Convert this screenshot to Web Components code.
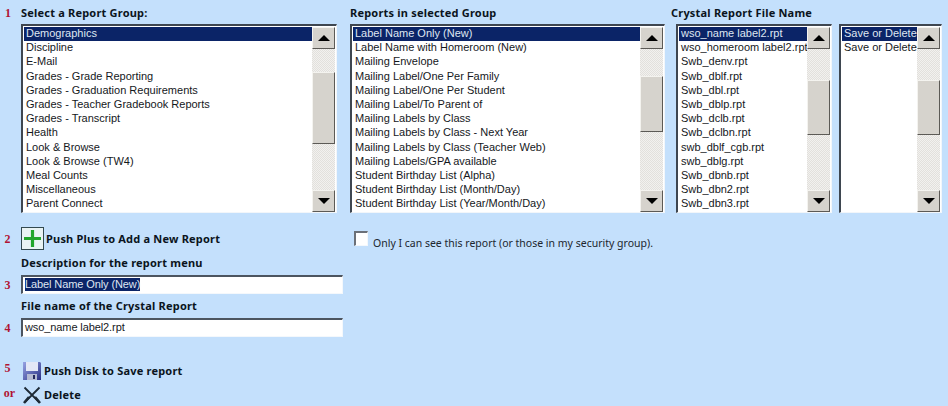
<!DOCTYPE html>
<html><head><meta charset="utf-8">
<style>
html,body{margin:0;padding:0;background:#c4e0fc;overflow:hidden}
body{width:948px;height:406px}
</style></head><body>
<report-form>
  <step-col slot="a" num="1" title="Select a Report Group:" >
    <list-box style="width:316px" thumb-top="23" thumb-h="72">
      <list-item selected>Demographics</list-item><list-item>Discipline</list-item><list-item>E-Mail</list-item><list-item>Grades - Grade Reporting</list-item><list-item>Grades - Graduation Requirements</list-item><list-item>Grades - Teacher Gradebook Reports</list-item><list-item>Grades - Transcript</list-item><list-item>Health</list-item><list-item>Look &amp; Browse</list-item><list-item>Look &amp; Browse (TW4)</list-item><list-item>Meal Counts</list-item><list-item>Miscellaneous</list-item><list-item>Parent Connect</list-item>
    </list-box>
  </step-col>
  <step-col slot="b" title="Reports in selected Group">
    <list-box style="width:315px" thumb-top="27" thumb-h="56">
      <list-item selected>Label Name Only (New)</list-item><list-item>Label Name with Homeroom (New)</list-item><list-item>Mailing Envelope</list-item><list-item>Mailing Label/One Per Family</list-item><list-item>Mailing Label/One Per Student</list-item><list-item>Mailing Label/To Parent of</list-item><list-item>Mailing Labels by Class</list-item><list-item>Mailing Labels by Class - Next Year</list-item><list-item>Mailing Labels by Class (Teacher Web)</list-item><list-item>Mailing Labels/GPA available</list-item><list-item>Student Birthday List (Alpha)</list-item><list-item>Student Birthday List (Month/Day)</list-item><list-item>Student Birthday List (Year/Month/Day)</list-item>
    </list-box>
  </step-col>
  <step-col slot="c" title="Crystal Report File Name" inset="5">
    <div style="display:flex;gap:7px">
    <list-box style="width:156px" thumb-top="31" thumb-h="55">
      <list-item selected>wso_name label2.rpt</list-item><list-item>wso_homeroom label2.rpt</list-item><list-item>Swb_denv.rpt</list-item><list-item>Swb_dblf.rpt</list-item><list-item>Swb_dbl.rpt</list-item><list-item>Swb_dblp.rpt</list-item><list-item>Swb_dclb.rpt</list-item><list-item>Swb_dclbn.rpt</list-item><list-item>swb_dblf_cgb.rpt</list-item><list-item>swb_dblg.rpt</list-item><list-item>Swb_dbnb.rpt</list-item><list-item>Swb_dbn2.rpt</list-item><list-item>Swb_dbn3.rpt</list-item>
    </list-box>
    <list-box style="width:103px" thumb-top="31" thumb-h="55">
      <list-item selected>Save or Delete</list-item><list-item>Save or Delete</list-item>
    </list-box>
    </div>
  </step-col>

  <step-row slot="lower" num="2" style="height:23px;margin-top:14px">
    <tool-action label="Push Plus to Add a New Report" gap="2">
      <svg width="23" height="23" viewBox="0 0 23 23"><rect x=".5" y=".5" width="22" height="22" fill="#e9f3f4" stroke="#33494f"/><path d="M11.500 3v17M3 11.500h17" stroke="#22a52c" stroke-width="3.200"/></svg>
    </tool-action>
    <check-line>Only I can see this report (or those in my security group).</check-line>
  </step-row>
  <field-row slot="lower" num="3" title="Description for the report menu" value="Label Name Only (New)" selected style="margin-top:6px"></field-row>
  <field-row slot="lower" num="4" title="File name of the Crystal Report" value="wso_name label2.rpt" style="margin-top:5px"></field-row>
  <step-row slot="lower" num="5" style="height:20px;margin-top:24px" num-shift="-3">
    <tool-action label="Push Disk to Save report" gap="2" pad="1">
      <svg width="20" height="20" viewBox="0 0 20 20"><defs><linearGradient id="g" x1="0" y1="0" x2="1" y2="1"><stop offset="0" stop-color="#98a4e4"/><stop offset="1" stop-color="#2a3186"/></linearGradient></defs><path d="M1 1h17l1 1v17H1z" fill="url(#g)"/><path d="M4 1h12v9H4z" fill="#e4e8f6"/><path d="M5 13h10v6H5z" fill="#b4bad2"/><path d="M11 14h2v4h-2z" fill="#23285c"/></svg>
    </tool-action>
  </step-row>
  <step-row slot="lower" num="or" num-width="19" style="height:20px;margin-top:4px" num-shift="-2">
    <tool-action label="Delete" gap="3" pad="2">
      <svg width="18" height="18" viewBox="0 0 18 18"><path d="M1.500 1.500L16 16M16.500 1.500L2 16" stroke="#1d2a36" stroke-width="1.800" fill="none"/><path d="M1 17l5-6M17 17l-5-6" stroke="#1d2a36" stroke-width="2.600"/></svg>
    </tool-action>
  </step-row>
</report-form>
<script>
const FONT='"Liberation Sans",Arial,sans-serif';
const BOLD='"Noto Sans","DejaVu Sans",sans-serif';
function def(name,html){
  customElements.define(name,class extends HTMLElement{
    connectedCallback(){
      if(this.shadowRoot)return;
      const s=this.attachShadow({mode:'open'});
      s.innerHTML=typeof html==='function'?html(this):html;
    }
  });
}
const NUM=`font:700 12px/14px "Liberation Serif",serif;color:#b01434`;
const HEAD=`font:700 11px/14px ${BOLD};letter-spacing:.2px;white-space:nowrap;color:#0b1420`;
def('report-form',`<style>
:host{display:block;width:948px;height:406px;overflow:hidden;color:#0b0f1a;font:11px ${FONT}}
.top{display:flex;padding-top:6px;height:207px}
::slotted([slot=a]){margin-left:21px;width:316px}
::slotted([slot=b]){margin-left:13px;width:315px}
::slotted([slot=c]){margin-left:6px}
</style>
<div class="top"><slot name="a"></slot><slot name="b"></slot><slot name="c"></slot></div>
<slot name="lower"></slot>`);
def('step-col',h=>`<style>
:host{display:block;position:relative}
.t{${HEAD};height:18px}
.n{position:absolute;left:-16px;top:0;${NUM}}
.b{padding-left:${h.getAttribute('inset')||0}px}
</style>${h.getAttribute('num')?`<div class="n">${h.getAttribute('num')}</div>`:''}<div class="t">${h.getAttribute('title')}</div><div class="b"><slot></slot></div>`);
def('list-box',h=>`<style>
:host{display:block;height:189px;box-sizing:border-box;background:#fff;border:1px solid #f2f6fa;border-top:2px solid #3e4650;border-left:2px solid #3e4650;position:relative}
.w{display:flex;height:100%;padding:1px 1px 0 1px;box-sizing:border-box}
.l{flex:1;min-width:0;overflow:hidden}
.s{width:23px;flex:none;display:flex;flex-direction:column;background:conic-gradient(#e2e0dc 25%,#f2f1ef 0 50%,#e2e0dc 0 75%,#f2f1ef 0) 0 0/2px 2px}
.btn,.th{background:#d6d3cd;box-sizing:border-box;border:1px solid;border-color:#f4f3ef #5c5a56 #5c5a56 #f4f3ef}
.btn{height:22px;flex:none;display:flex;align-items:center;justify-content:center}
.tr{flex:1;position:relative}
.th{position:absolute;left:0;right:0;top:${h.getAttribute('thumb-top')}px;height:${h.getAttribute('thumb-h')}px}
.up{width:0;height:0;border:6px solid transparent;border-top:0;border-bottom:6px solid #000}
.dn{width:0;height:0;border:6px solid transparent;border-bottom:0;border-top:6px solid #000}
</style><div class="w"><div class="l"><slot></slot></div>
<div class="s"><div class="btn"><i class="up"></i></div><div class="tr"><div class="th"></div></div><div class="btn"><i class="dn"></i></div></div></div>`);
def('list-item',h=>`<style>
:host{display:block;height:14.2px;padding-left:2px;white-space:nowrap;color:#15181c;font:11px/13px ${FONT};overflow:hidden}
:host([selected]){background:#0b2467;color:#dfe6f2}
</style><slot></slot>`);
def('step-row',h=>`<style>
:host{display:flex;align-items:center;position:relative;padding-left:21px}
.n{position:absolute;left:0;width:${h.getAttribute('num-width')||15}px;text-align:center;top:50%;transform:translateY(calc(-50% + ${h.getAttribute('num-shift')||0}px));${NUM}}
</style><div class="n">${h.getAttribute('num')}</div><slot></slot>`);
def('tool-action',h=>`<style>
:host{display:flex;align-items:center;gap:${h.getAttribute('gap')}px;padding-left:${h.getAttribute('pad')||0}px;width:329px;flex:none;box-sizing:border-box}
span{${HEAD}}
</style><slot></slot><span>${h.getAttribute('label')}</span>`);
def('check-line',`<style>
:host{display:flex;align-items:flex-start;gap:5px;font:10.5px/14px ${BOLD};color:#20262e;white-space:nowrap;margin-left:4px}
.c{width:14px;height:15px;box-sizing:border-box;background:#fff;border:1px solid #f4f8fc;border-top:2px solid #6b7078;border-left:2px solid #6b7078;margin-top:4px}
span{padding-top:9px}
</style><div class="c"></div><span><slot></slot></span>`);
def('field-row',h=>`<style>
:host{display:block;padding-left:21px;position:relative}
.t{${HEAD};height:19px}
.i{width:322px;height:19px;box-sizing:border-box;background:#fff;border:1px solid #f4f8fc;border-top:2px solid #4c5560;border-left:2px solid #4c5560;padding:1px 0 0 2px;font:11px/13px ${FONT};letter-spacing:-.1px;color:#15181c;white-space:nowrap}
.s{background:#0b2467;color:#dfe6f2;display:inline-block;height:13px}
.n{position:absolute;left:0;width:15px;text-align:center;top:22px;${NUM}}
</style><div class="t">${h.getAttribute('title')}</div><div class="n">${h.getAttribute('num')}</div>
<div class="i"><span class="${h.hasAttribute('selected')?'s':''}">${h.getAttribute('value')}</span></div>`);
</script>
</body></html>
